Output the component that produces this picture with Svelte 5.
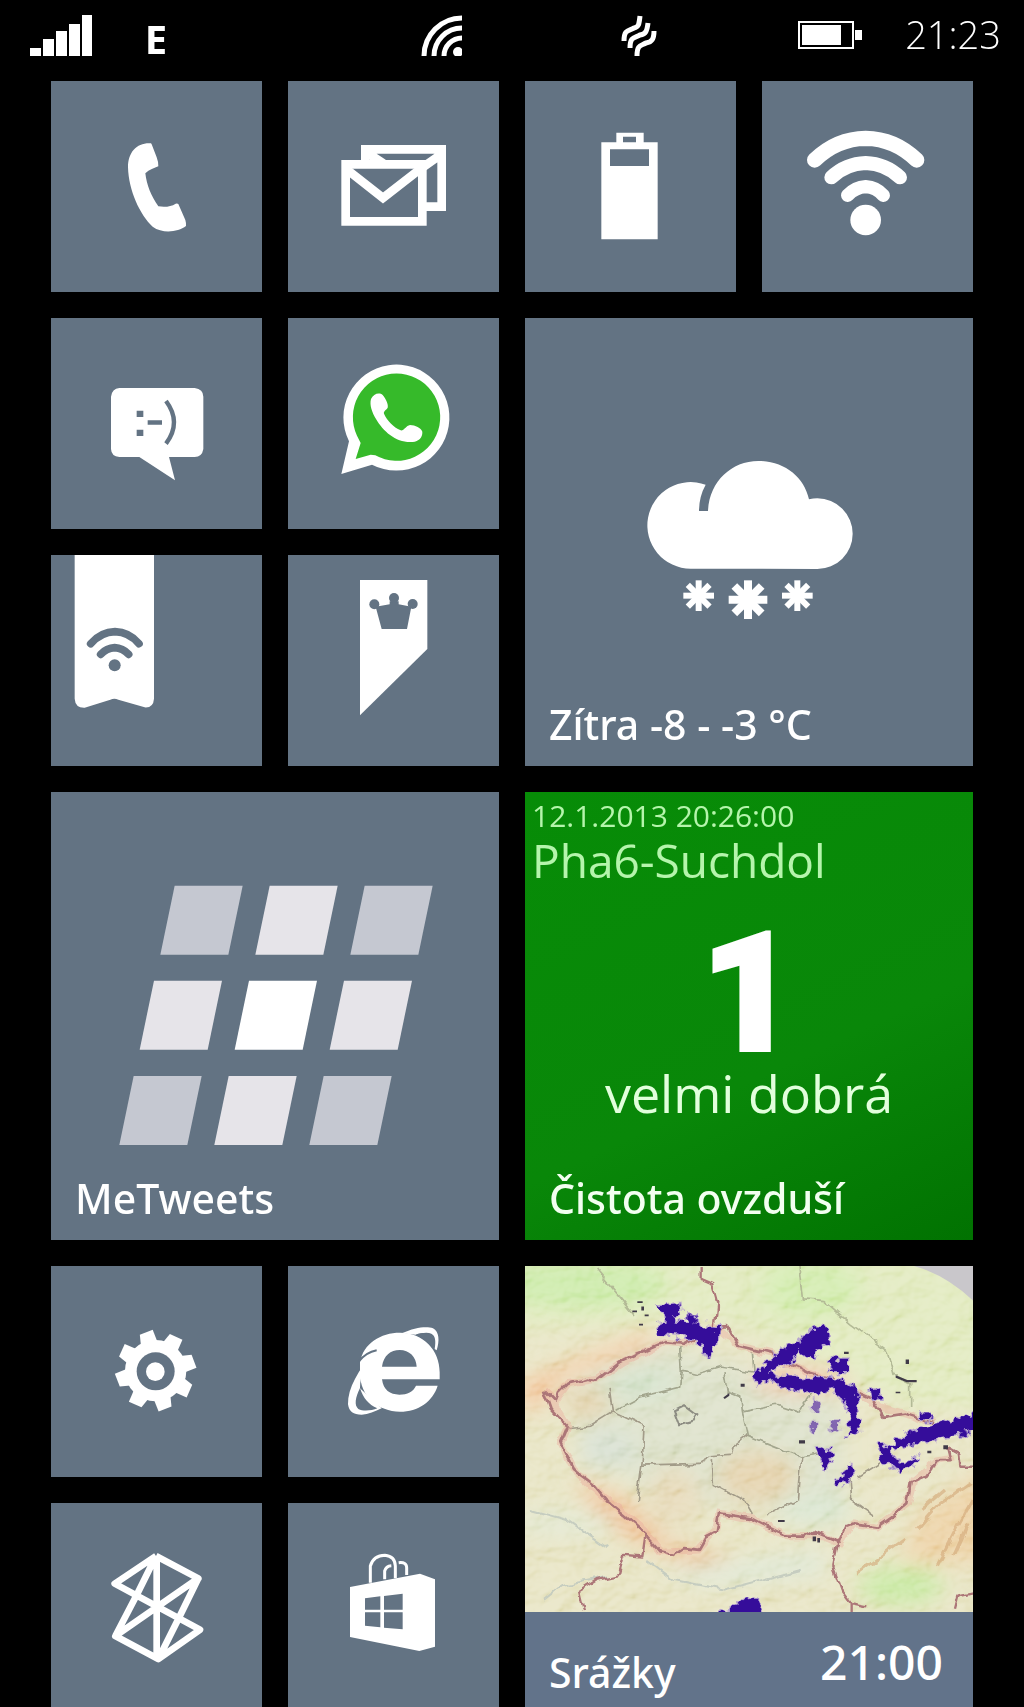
<script lang="ts">
	const bars = [8, 17, 25, 32, 41];
	const teeth = [-14, 31, 76, 121, 166, 211, 256, 301];
	const flakes = [
		{ x: 524, y: 497, r: 46, w: 18 },
		{ x: 672, y: 509, r: 58, w: 24 },
		{ x: 820, y: 497, r: 46, w: 18 },
	];

	// MeTweets logo: three rows of leaning cells, brightest in the middle
	const cellRows = [
		{ x: 331, y: 287, fills: ['#c5c8d1', '#e6e4e9', '#c5c8d1'] },
		{ x: 269, y: 572, fills: ['#e6e4e9', '#ffffff', '#e6e4e9'] },
		{ x: 208, y: 858, fills: ['#c5c8d1', '#e6e4e9', '#c5c8d1'] },
	];

	const air = {
		time: '12.1.2013 20:26:00',
		station: 'Pha6-Suchdol',
		index: 1,
		verdict: 'velmi dobrá',
	};
</script>

<main class="phone">
	<header class="status">
		<svg class="signal" viewBox="0 0 62 41" aria-label="Signal">
			{#each bars as h, i}
				<rect x={i * 13} y={41 - h} width="11" height={h} />
			{/each}
		</svg>
		<span class="network">E</span>
		<svg class="wifi" viewBox="0 0 41 41" aria-label="Wi-Fi">
			<path d="M3 41A38 38 0 0 1 41 3M13 41A28 28 0 0 1 41 13M23 41A18 18 0 0 1 41 23" fill="none" stroke="#fff" stroke-width="5" />
			<circle cx="37" cy="37" r="5" />
		</svg>
		<svg class="vibrate" viewBox="0 0 36 42" aria-label="Vibrate">
			<path d="M3 26C3 14 8 16 13 13C18 12 18 9 19 1M9 33C9 21 14 23 19 20C25 19 26 16 27 8M16 41C16 29 20 31 25 28C31 27 33 24 33 16" fill="none" stroke="#fff" stroke-width="5" />
		</svg>
		<svg class="battery" viewBox="0 0 64 28" aria-label="Battery">
			<path d="M1 1H55V27H1Z" fill="none" stroke="#fff" stroke-width="2" />
			<path d="M4 4H43V24H4ZM57 9H64V19H57Z" />
		</svg>
		<span class="clock">21:23</span>
	</header>

	<div class="tiles">
		<button class="tile" aria-label="Phone">
			<svg viewBox="3 3 633 633">
				<path d="M303 190C262 187 234 215 234 262C236 332 270 405 308 440C338 462 384 456 408 438Q409 430 406 420L385 372Q382 369 377 371C363 380 345 382 325 379C303 347 290 315 286 280C297 269 314 264 325 259Q326 248 320 232L305 193Z" />
			</svg>
		</button>

		<button class="tile" aria-label="Mail">
			<svg viewBox="714 3 633 633">
				<path d="M946 252V208H1175V380H1118M950 217L1000 250M1175 222L1118 262" class="mail" />
				<path d="M887 253H1117V424H887Z" class="mail" />
				<path d="M890 268L999 354L1117 262" class="mail" />
			</svg>
		</button>

		<button class="tile" aria-label="Battery level">
			<svg viewBox="3 3 633 633">
				<path fill-rule="evenodd" d="M232 187H277V158H359V187H401V478H232ZM297 170V187H336V170ZM258 208V258H375V208Z" />
			</svg>
		</button>

		<button class="tile" aria-label="Wi-Fi settings">
			<svg viewBox="714 3 633 633">
				<path class="arc" stroke-width="46" d="M872 240Q938 176 1025 175Q1112 176 1178 240" />
				<path class="arc" stroke-width="42" d="M922 292Q965 251 1025 249Q1085 251 1128 292" />
				<path class="arc" stroke-width="40" d="M971 346Q993 322 1025 320Q1057 322 1078 346" />
				<circle cx="1025" cy="420" r="46" />
			</svg>
		</button>

		<button class="tile" aria-label="Messaging">
			<svg viewBox="3 9 633 633">
				<path d="M208 219H434Q460 223 460 245V402Q456 426 434 426H357L375 496L268 426H208Q184 424 183 402V245Q186 221 208 219Z" />
				<path class="cut" d="M260 287H280V306H260ZM260 344H280V363H260ZM293 316H336V329H293Z" />
				<path class="cut-line" stroke-width="13" d="M348 258Q396 322 348 386" />
			</svg>
		</button>

		<button class="tile" aria-label="WhatsApp">
			<svg viewBox="714 9 633 633">
				<path d="M874 477L897 379A159 159 0 1 1 966 449Z" />
				<path d="M917 432L932 384L921 362A131 131 0 1 1 976 421L962 419Z" fill="#36ba2a" />
				<path d="M963 252C970 236 988 231 998 240C1008 252 1016 270 1013 278C1008 286 1000 288 1002 296C1012 318 1030 336 1052 346C1062 348 1068 332 1080 330C1096 331 1113 338 1117 350C1118 368 1106 379 1088 381C1040 385 1000 350 978 312C966 292 958 270 963 252Z" />
			</svg>
		</button>

		<button class="tile wide" aria-label="Weather">
			<svg viewBox="3 -336 1344 1344">
				<path d="M500 416A130 130 0 1 1 545 164Q525 200 525 243H552C556 155 622 93 703 93C780 93 840 140 855 208Q868 205 880 205A106 106 0 0 1 880 417Z" />
				{#each flakes as f}
					<g transform="translate({f.x} {f.y})" stroke="#fff" stroke-width={f.w}>
						{#each [0, 45, 90, 135] as a}
							<path d="M{-f.r} 0H{f.r}" transform="rotate({a})" />
						{/each}
					</g>
				{/each}
			</svg>
			<span class="label">Zítra -8 - -3 °C</span>
		</button>

		<button class="tile" aria-label="NFC tags">
			<svg viewBox="3 9 633 633">
				<path d="M74 9H312V440Q310 468 284 466L205 443Q193 438 181 443L104 467Q76 468 74 440Z" />
				<path class="cut-line round" stroke-width="23" d="M122 275Q153 240 195 239Q237 240 267 275M152 307Q170 288 194 287Q218 288 236 307" />
				<circle class="cut" cx="194" cy="340" r="18" />
			</svg>
		</button>

		<button class="tile" aria-label="Pennant">
			<svg viewBox="714 9 633 633">
				<path d="M930 84H1132V291L930 490Z" />
				<path class="cut" d="M977 164L1019 157V148H1046V157L1084 164L1071 231H995Z" />
				<circle class="cut" cx="973" cy="157" r="15" />
				<circle class="cut" cx="1032" cy="138" r="15" />
				<circle class="cut" cx="1088" cy="156" r="15" />
			</svg>
		</button>

		<button class="tile wide">
			<svg viewBox="3 6 1344 1344" aria-hidden="true">
				{#each cellRows as row}
					{#each row.fills as fill, i}
						<path d="M{row.x + i * 285} {row.y + 207}l43 -207h204l-43 207z" {fill} />
					{/each}
				{/each}
			</svg>
			<span class="label">MeTweets</span>
		</button>

		<button class="tile wide air">
			<span class="air-time">{air.time}</span>
			<span class="air-station">{air.station}</span>
			<span class="air-index">{air.index}</span>
			<span class="air-verdict">{air.verdict}</span>
			<span class="label">Čistota ovzduší</span>
		</button>

		<button class="tile" aria-label="Settings">
			<svg viewBox="3 3 633 633">
				<circle cx="317" cy="317" r="92" />
				{#each teeth as a}
					<path d="M385 290L433 297L438 338L385 345Z" transform="rotate({a} 317 317)" />
				{/each}
				<circle class="cut" cx="317" cy="319" r="57" />
				<circle cx="316" cy="320" r="28" />
			</svg>
		</button>

		<button class="tile" aria-label="Internet Explorer">
			<svg viewBox="714 3 633 633">
				<path d="M930 292C940 235 992 203 1050 203C1120 203 1169 255 1169 322V343H996C1000 375 1020 389 1048 389C1072 389 1090 380 1098 362H1163C1148 410 1105 440 1050 440C985 440 930 395 930 325Z" />
				<path class="cut" d="M996 305C1000 272 1022 255 1049 255C1078 255 1098 275 1100 305Z" />
				<path d="M975 256C925 315 893 370 894 418C897 440 910 449 935 449C955 448 975 440 995 430L930 370C930 330 945 295 975 256Z" />
				<path class="cut" d="M930 369C940 400 955 418 982 430C965 437 940 440 925 432C912 420 916 398 930 369Z" />
				<path d="M926 290Q948 262 980 256" class="cut-line" stroke-width="6" />
				<path d="M1055 205C1095 187 1130 183 1149 190C1168 200 1169 228 1160 256L1154 252C1158 226 1156 212 1144 206C1132 201 1112 204 1097 209Z" />
				<path class="cut" d="M1097 210C1118 202 1142 202 1149 213C1154 224 1152 236 1147 250C1136 232 1119 219 1097 210Z" />
			</svg>
		</button>

		<button class="tile wide rain">
			<svg class="map" viewBox="3 6 1344 1041" preserveAspectRatio="none" aria-hidden="true">
				<defs>
					<filter id="soft"><feGaussianBlur stdDeviation="30" /></filter>
					<filter id="rough" x="-5%" y="-5%" width="110%" height="110%">
						<feTurbulence type="fractalNoise" baseFrequency=".025" numOctaves="2" seed="4" />
						<feDisplacementMap in="SourceGraphic" scale="24" xChannelSelector="R" yChannelSelector="G" />
					</filter>
					<filter id="ragged" x="-10%" y="-20%" width="120%" height="140%">
						<feTurbulence type="fractalNoise" baseFrequency=".045" numOctaves="2" seed="9" />
						<feDisplacementMap in="SourceGraphic" scale="38" xChannelSelector="R" yChannelSelector="G" />
					</filter>
					<filter id="relief" x="0" y="0" width="100%" height="100%">
						<feTurbulence type="fractalNoise" baseFrequency=".012 .016" numOctaves="3" seed="12" />
						<feDiffuseLighting surfaceScale="26" lighting-color="#fff">
							<feDistantLight azimuth="225" elevation="55" />
						</feDiffuseLighting>
					</filter>
				</defs>
				<rect x="3" y="6" width="1344" height="1041" fill="#e3dfb9" />
				<g filter="url(#soft)">
					<path d="M-60 -60H1400V440L1150 430L740 230L560 160L300 180L-60 200Z" fill="#dce6b4" />
					<ellipse cx="170" cy="60" rx="260" ry="75" fill="#c3e79c" />
					<ellipse cx="860" cy="70" rx="150" ry="90" fill="#cbe8a2" />
					<path d="M110 380L400 240L720 320L960 420L960 720L720 740L380 700L160 500Z" fill="#d6dbc0" />
					<ellipse cx="250" cy="560" rx="90" ry="60" fill="#d0dac9" />
					<ellipse cx="350" cy="360" rx="110" ry="50" fill="#cdddc3" />
					<ellipse cx="870" cy="740" rx="120" ry="50" fill="#d3e1c8" />
					<path d="M-30 360L350 210L430 235L120 350L20 460Z" fill="#f1c093" />
					<ellipse cx="190" cy="420" rx="70" ry="40" fill="#e0c99c" />
					<path d="M150 650L300 700L440 840L640 890L600 950L440 880L240 790Z" fill="#edb888" />
					<ellipse cx="700" cy="640" rx="120" ry="80" fill="#e0cba0" />
					<ellipse cx="450" cy="700" rx="80" ry="90" fill="#e2d3ad" />
					<ellipse cx="830" cy="350" rx="150" ry="45" fill="#ecc6a8" />
					<path d="M1400 600L1180 760L1130 900L1400 900Z" fill="#e9ca98" />
					<ellipse cx="1130" cy="970" rx="130" ry="60" fill="#c1e597" />
					<ellipse cx="120" cy="780" rx="160" ry="40" fill="#dde3c8" />
					<path d="M400 920L900 860L900 940L540 970Z" fill="#d9e3cc" />
				</g>
				<rect class="relief" x="3" y="6" width="1344" height="1041" filter="url(#relief)" />
				<path d="M1170 6Q1265 32 1347 110V6Z" fill="#c9c7cb" />

				<g class="ridges" fill="none" filter="url(#rough)">
					<path d="M1340 660L1240 730L1180 800M1345 710L1290 810L1240 910M1335 780L1290 880M1260 680L1190 740M1140 830L1000 930" />
				</g>

				<g filter="url(#rough)" fill="none">
					<g stroke="#b3ba96" stroke-width="5">
						<path d="M215 12L330 150M825 12L835 105L900 110L980 180L1090 260L1110 335L1160 360V430" />
						<path d="M470 250L475 320L470 370L350 400L275 440M475 320L520 330L590 310L690 325L685 265M600 325L610 385L650 400L655 445L670 515L830 580L890 570M655 445L760 425L820 445L860 390" stroke="#a3a68e" />
						<path d="M255 370L265 445L360 490L355 590L340 710M135 492L200 485L265 445M355 605L525 600L560 580L620 575L625 550L670 515M565 590L568 660L660 710L685 755M830 580L820 710L730 755M975 640L980 710L1050 760M1000 640L1080 590" stroke="#a29b88" />
						<path d="M450 440L480 425L520 455L510 470L465 482Z" stroke="#8d8d83" stroke-width="6" />
						<path d="M20 740L130 770L250 855M60 1010L110 970L250 940M370 890L450 950L600 980L830 920" stroke="#c6cdc0" stroke-width="6" />
					</g>
					<g stroke="#e8a79c" stroke-width="22" opacity=".4">
						<path d="M65 380L95 410L130 360L220 345L300 295L420 235L480 240L575 190L640 245L740 270L860 330L1010 390L1070 430L1140 450L1230 480" />
						<path d="M65 385L130 490L110 540L150 620L240 700L360 800L410 865L520 860L575 800L585 750L680 765L790 820L900 820L945 840L990 780L1060 790L1150 720L1170 650L1240 590L1290 580" />
					</g>
					<g stroke="#ac7678" stroke-width="8" stroke-linejoin="round">
						<path d="M65 380L95 410L105 385L130 360L190 345L220 350L290 295L340 270L420 235L480 240L570 195L610 190L640 245L740 270L860 330L930 350L1010 390L1045 405L1080 460L1140 450L1230 480" />
						<path d="M60 378L80 435L130 490L110 540L150 620L210 665L250 715L300 755L360 810L410 865L450 875L480 855L525 860L545 825L575 810L585 750L680 765L730 790L790 820L845 820L870 805L945 835L965 790L990 780L1060 790L1110 755L1150 720L1160 660L1205 640L1240 590L1280 590L1270 550L1305 570L1310 610H1347" />
						<path d="M530 6L530 45L565 60L580 115L572 195M365 810L355 880L300 875L285 935L220 950L165 985L180 1047M940 835L925 910L950 980L980 1020V1047M980 1020L1030 1030M1290 1040L1300 1000L1347 990" stroke-width="7" />
					</g>
				</g>

				<g filter="url(#ragged)" fill="#340a9a" stroke="#b7a5cf" stroke-width="8" paint-order="stroke">
					<path d="M400 125L465 118L470 150L445 152L455 170L490 175V155H512V182L585 190L580 240L560 245L570 262L560 282L535 270L545 248L510 230L465 215L405 210L398 185L425 180V155Z" />
					<path d="M688 340L740 285L800 240L880 190L915 200L918 240L880 255L870 280L835 275L830 255L800 295L745 318L735 335L920 345L960 352L1000 380V440L1005 505L970 515L985 460L960 420L930 372L890 388L790 375L745 350L700 362Z" />
					<path d="M918 285H972V325H920ZM1040 375H1072V405H1045ZM1188 450H1220V470H1188Z" />
					<path d="M1150 510L1370 445V502L1190 535L1130 548L1100 560L1115 590L1140 600L1180 580L1165 610L1130 624L1070 585L1065 540L1090 555Z" />
					<path d="M875 550L920 560L930 580L915 600L905 618L885 575ZM930 650L960 640L970 605H985V630L965 660L930 665Z" />
					<path d="M640 1030Q645 1005 680 1005Q712 1010 715 1060H590V1045Z" />
					<path d="M920 470H945V500H920ZM870 405L890 420L885 445H870ZM860 475H870V510H860Z" opacity=".55" />
				</g>
				<g fill="#403a48">
					<path d="M340 112h16v5h-16zM325 140h14v5h-14zM352 128h8v12h-8zM362 152h12v5h-12zM345 180h12v5h-12zM650 360h12v9h-12zM598 402l18-14v8l-14 10zM960 264h14v7h-14zM1145 287h10v14h-10zM1115 335l35 14h28v7h-30l-33-14zM825 530h18v10h-18zM762 770h20v6h-20zM866 820h10v14h-10zM880 824h8v14h-8zM1258 545h14v12h-14zM1210 562h12v7h-12zM1115 384h14v5h-14z" />
				</g>
			</svg>
			<span class="rain-bar">
				<span class="label">Srážky</span>
				<span class="rain-time">21:00</span>
			</span>
		</button>

		<button class="tile" aria-label="Data link">
			<svg viewBox="3 6 633 633">
				<path d="M318 165L194 248L450 386L325 474L196 405L445 232L318 165M320 165V474M318 165L262 278L196 405M445 232L388 348L325 474" fill="none" stroke="#fff" stroke-width="20" stroke-linejoin="round" />
			</svg>
		</button>

		<button class="tile" aria-label="Store">
			<svg viewBox="714 6 633 633">
				<path d="M900 258L1110 218L1155 235V437L1108 450L900 408Z" />
				<path class="cut" d="M945 292L991 286V326H945ZM1002 285L1058 278V326H1002ZM945 334H991V379L945 374ZM1002 334H1058V385L1002 380Z" />
				<path d="M961 245V195Q970 164 1005 163Q1035 166 1036 195V232M1004 235V210Q1008 195 1024 194M1046 185Q1070 182 1070 200V222" fill="none" stroke="#fff" stroke-width="9" />
			</svg>
		</button>
	</div>
</main>

<style>
	:global(body) { background: #000; }

	.phone { height: 100vh; overflow: hidden; background: #000; color: #fff; font-family: "Open Sans", "Noto Sans", sans-serif; }

	.status { display: grid; grid-template-columns: 115fr 277fr 200fr 178fr 107fr auto; height: 81px; padding: 15px 23px 0 30px; box-sizing: border-box; }
	.status svg { fill: #fff; }
	.signal { width: 62px; height: 41px; }
	.network { font-size: 40px; font-weight: 700; line-height: 48px; }
	.wifi { width: 41px; height: 41px; }
	.vibrate { width: 36px; height: 42px; }
	.battery { width: 64px; height: 28px; margin-top: 6px; }
	.clock { font-size: 38px; font-weight: 300; line-height: 38px; }

	.tiles { display: grid; grid-template-columns: repeat(4, minmax(0, 1fr)); gap: 26px; padding: 0 51px; }
	.tile { display: grid; width: 100%; aspect-ratio: 1; margin: 0; padding: 0; border: 0; border-radius: 0; overflow: hidden; background: #637383; color: inherit; font: inherit; text-align: left; cursor: pointer; }
	.tile > * { grid-area: 1 / 1; }
	.tile svg { display: block; width: 100%; height: 100%; fill: #fff; }
	.wide { grid-column: span 2; grid-row: span 2; }

	.tile .cut { fill: #637383; }
	.cut-line { fill: none; stroke: #637383; }
	.round { stroke-linecap: round; }
	.mail { fill: none; stroke: #fff; stroke-width: 26; }
	.arc { fill: none; stroke: #fff; stroke-linecap: round; }

	.label { align-self: end; padding: 0 24px 18px; font-family: "Noto Sans", "Open Sans", sans-serif; font-size: 41px; font-weight: 500; line-height: 48px; white-space: nowrap; }

	.air { display: flex; flex-direction: column; padding-top: 4px; background: linear-gradient(155deg, #078c07 0%, #098709 60%, #047a04 85%, #017201 100%); }
	.air-time { padding-left: 7px; font-size: 30px; line-height: 40px; color: #b5f5ac; }
	.air-station { padding-left: 7px; font-size: 46px; line-height: 48px; color: #b5f5ac; }
	.air-index { margin-top: 50px; font-family: Roboto, "Open Sans", sans-serif; font-size: 166px; font-weight: 900; line-height: 120px; text-align: center; -webkit-text-stroke: 4px #fff; }
	.air-verdict { margin-top: 9px; font-size: 52px; line-height: 60px; text-align: center; color: #e2ffdc; }
	.air .label { align-self: start; margin-top: auto; color: #f2fff0; }

	.rain { grid-template-rows: minmax(0, 1fr) 102px; }
	.rain .map { grid-area: 1 / 1; }
	.rain-bar { grid-area: 2 / 1; display: flex; justify-content: space-between; background: #62738a; }
	.rain-time { padding: 20px 30px 0 0; font-family: "Noto Sans", "Open Sans", sans-serif; font-size: 48px; font-weight: 500; line-height: 60px; }
	.relief { mix-blend-mode: soft-light; opacity: .6; }
	.ridges { stroke: #d3a878; stroke-width: 10; opacity: .6; }
</style>
